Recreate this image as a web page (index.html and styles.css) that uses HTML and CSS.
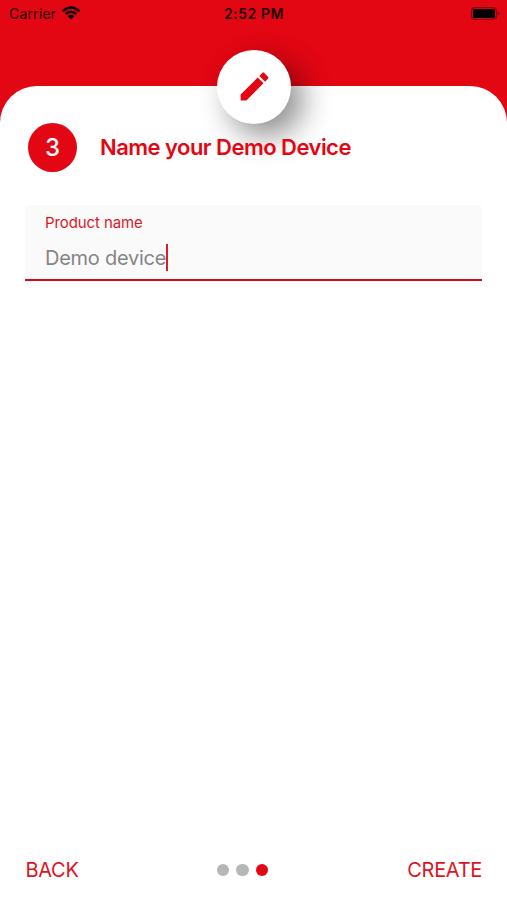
FILE: index.html
```html
<!DOCTYPE html>
<html lang="en">
<head>
<meta charset="utf-8">
<title>Name your Demo Device</title>
<link rel="stylesheet" href="styles.css">
</head>
<body>
<header class="status">
  <div class="carrier"><span>Carrier</span>
    <svg class="wifi" viewBox="0 0 18 14"><path d="M0 4.3Q9-3.9 18 4.3L16.3 6Q9-.3 1.7 6ZM2.8 7.1Q9 1.8 15.2 7.1L13.4 8.9Q9 5.2 4.6 8.9ZM5.7 10Q9 7.4 12.3 10L9 13.5Z"/></svg>
  </div>
  <time class="clock">2:52 PM</time>
  <svg class="battery" viewBox="0 0 29 13"><rect x=".6" y=".6" width="24.8" height="11.8" rx="3" fill="none" stroke="#000" stroke-opacity=".4" stroke-width="1.1"/><rect x="2" y="2" width="22" height="9" rx="1.3"/><path d="M26.8 4.5Q28.6 5 28.6 6.5T26.8 8.5Z" fill-opacity=".4"/></svg>
</header>
<main class="sheet">
  <div class="badge">
    <svg class="pencil" viewBox="0 0 24 24"><path d="M3 17.25V21h3.75L17.81 9.94l-3.75-3.75L3 17.25zM20.71 7.04c.39-.39.39-1.02 0-1.41l-2.34-2.34c-.39-.39-1.02-.39-1.41 0l-1.83 1.83 3.75 3.75 1.83-1.83z"/></svg>
  </div>
  <div class="heading">
    <span class="step">3</span>
    <h1 class="title">Name your Demo Device</h1>
  </div>
  <div class="field">
    <div class="label">Product name</div>
    <div class="value"><span>Demo device</span><i class="caret"></i></div>
  </div>
  <footer class="nav">
    <div class="back">BACK</div>
    <div class="dots"><i class="dot"></i><i class="dot"></i><i class="dot active"></i></div>
    <div class="create">CREATE</div>
  </footer>
</main>
</body>
</html>
```
FILE: styles.css
```css
* { box-sizing: border-box; }
body {
  margin: 0;
  height: 900px;
  display: flex;
  flex-direction: column;
  overflow: hidden;
  background: #e30613;
  color: #e30613;
  font-family: Inter, "Liberation Sans", sans-serif;
}
.status {
  height: 86px;
  padding: 4px 7px 0 9px;
  display: grid;
  grid-template-columns: 1fr auto 1fr;
  align-items: start;
  color: #200003;
  line-height: 20px;
}
.carrier { display: flex; gap: 6px; font-size: 14px; letter-spacing: 0.15px; }
.wifi { width: 18px; height: 14px; margin-top: 2px; fill: #000; }
.clock { font-size: 14px; font-weight: 600; letter-spacing: 0.55px; margin-right: 1px; }
.battery { width: 29px; height: 13px; justify-self: end; margin-top: 3px; }
.sheet {
  position: relative;
  flex: 1;
  display: flex;
  flex-direction: column;
  background: #fff;
  border-radius: 37px 37px 0 0;
  padding: 37px 25px 0;
}
.badge {
  position: absolute;
  left: 217px;
  top: -36.5px;
  width: 74px;
  height: 74px;
  border-radius: 50%;
  background: #fff;
  display: grid;
  place-items: center;
  box-shadow: 12px 12px 30px rgba(0, 0, 0, 0.45);
}
.pencil { width: 37px; height: 37px; fill: #e30613; }
.heading { position: relative; display: flex; align-items: center; gap: 23px; padding-left: 3px; }
.step {
  width: 49px;
  height: 49px;
  border-radius: 50%;
  background: #e30613;
  color: #fff;
  font-size: 24px;
  font-weight: 500;
  line-height: 49px;
  text-align: center;
}
.title { margin: 0 0 2px; font-size: 22px; font-weight: 600; letter-spacing: -0.53px; white-space: nowrap; }
.field {
  height: 76px;
  margin-top: 33px;
  padding: 8px 20px 0;
  background: #fafafa;
  border-bottom: 2px solid #d20a1b;
  border-radius: 4px 4px 0 0;
}
.label { font-size: 15px; line-height: 20px; letter-spacing: -0.1px; color: #d71928; }
.value { display: flex; align-items: center; height: 28px; margin-top: 11px; font-size: 20px; letter-spacing: -0.25px; color: #858585; white-space: nowrap; }
.caret { width: 2px; height: 27px; margin-bottom: 2px; background: #dc1b2c; }
.nav {
  margin: auto 0 15px;
  height: 30px;
  display: grid;
  grid-template-columns: 1fr auto 1fr;
  align-items: center;
  font-size: 20px;
  color: #dc1524;
}
.back, .create { letter-spacing: -0.3px; }
.back { padding-left: 0.5px; }
.create { justify-self: end; }
.dots { display: flex; gap: 7px; margin-right: 22px; }
.dot { width: 12.5px; height: 12.5px; border-radius: 50%; background: #b5b6b6; }
.dot.active { background: #e30613; }
```
